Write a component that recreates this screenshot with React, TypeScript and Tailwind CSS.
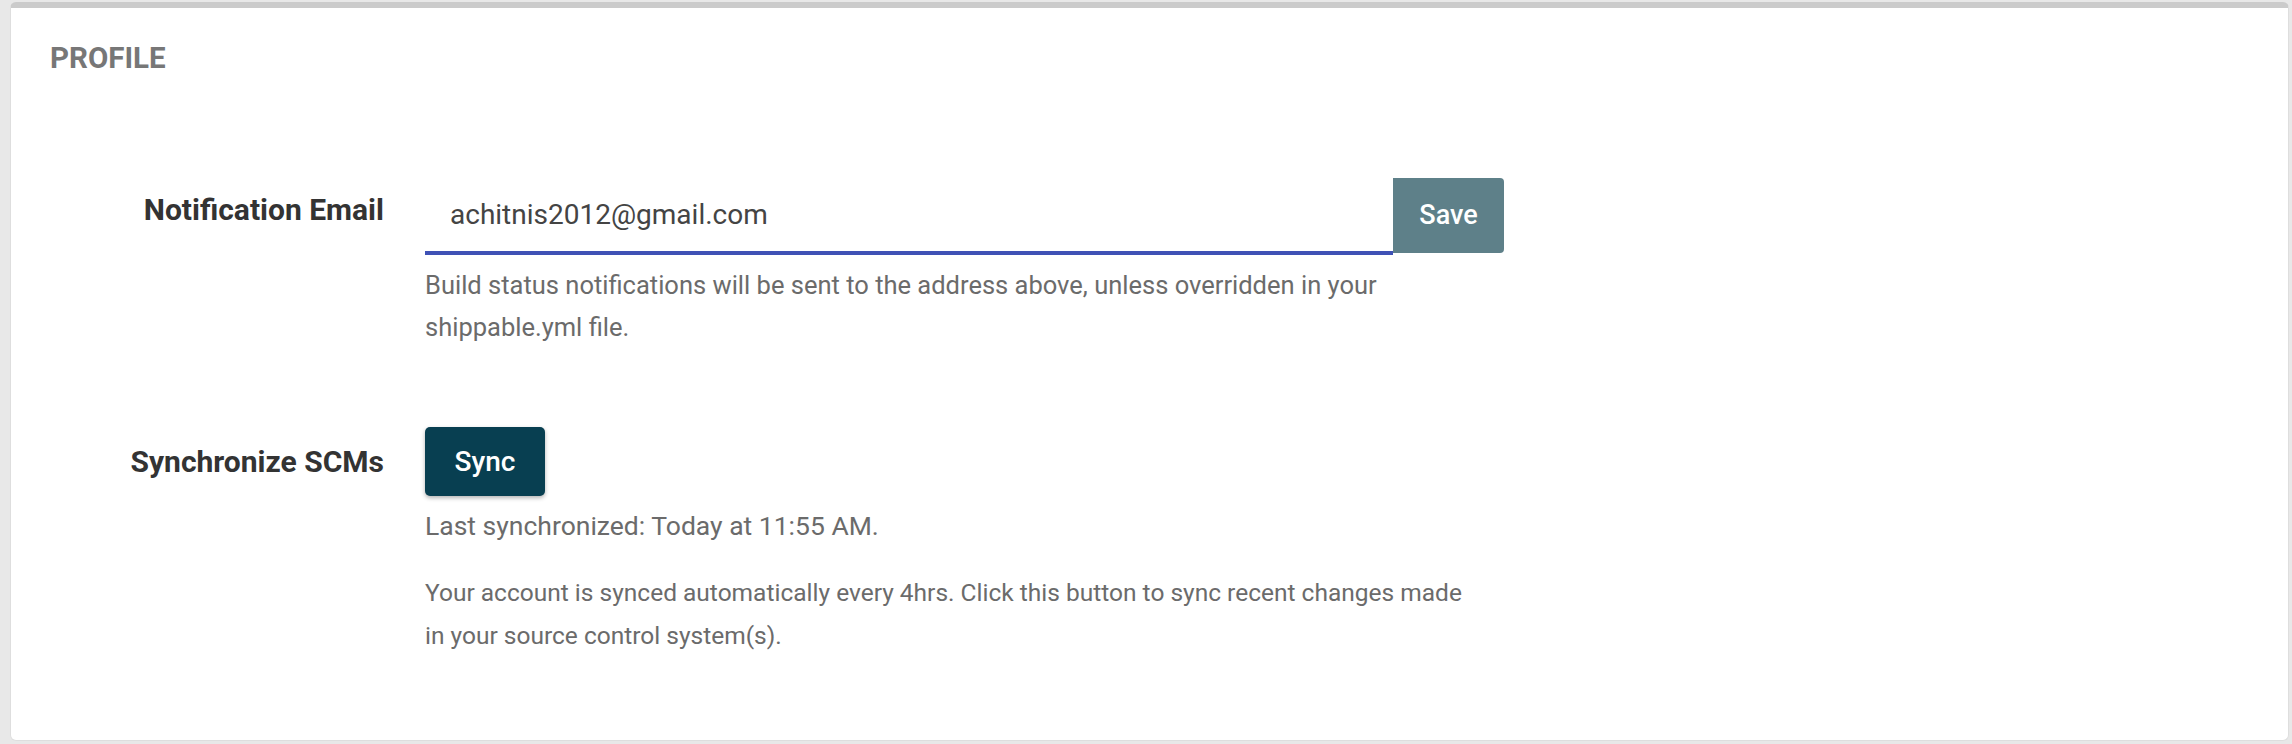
import React, { useState } from 'react';

export default function App() {
  const [email, setEmail] = useState('achitnis2012@gmail.com');

  return (
    <div
      className="h-[744px] bg-[#e8e8e8] pl-[10px] pt-[2px] pr-[3px] pb-[3px]"
      style={{ fontFamily: 'Roboto, "Noto Sans", sans-serif' }}
    >
      <div className="h-full rounded-[6px] border-t-[6px] border-x border-b border-[#cbcbcb] border-x-[#dedede] border-b-[#dedede] bg-white">
        <h2 className="pl-[39px] pt-[34px] text-[29.5px] leading-[32px] font-bold text-[#777777]">PROFILE</h2>

        <div className="mt-[104px] flex flex-col">
          {/* Notification email */}
          <div className="flex">
            <div className="w-[373px] shrink-0 pt-[12px] text-right text-[30px] leading-[40px] font-bold text-[#333333]">
              Notification Email
            </div>
            <div className="ml-[41px] w-[1079px]">
              <div className="flex items-end">
                <input
                  value={email}
                  onChange={(e) => setEmail(e.target.value)}
                  className="h-[77px] flex-1 border-b-[4px] border-[#3f51b5] pl-[25px] text-[28px] text-[#444444] outline-none"
                />
                <button className="mb-[2px] h-[75px] w-[111px] rounded-r-[4px] bg-[#5e8089] text-[27px] font-medium text-white">
                  Save
                </button>
              </div>
              <p className="mt-[9px] w-[1050px] text-[25.5px] leading-[42px] text-[#6b6b6b]">
                Build status notifications will be sent to the address above, unless overridden in your shippable.yml file.
              </p>
            </div>
          </div>

          {/* Synchronize SCMs */}
          <div className="mt-[79px] flex">
            <div className="w-[373px] shrink-0 pt-[15px] text-right text-[30px] leading-[40px] font-bold text-[#333333]">
              Synchronize SCMs
            </div>
            <div className="ml-[41px] w-[1079px]">
              <button className="h-[69px] w-[120px] rounded-[5px] bg-[#083f51] text-[28px] font-medium text-white shadow-[0_2px_4px_rgba(0,0,0,0.3)]">
                Sync
              </button>
              <p className="mt-[9px] text-[26.5px] leading-[42px] text-[#6b6b6b]">Last synchronized: Today at 11:55 AM.</p>
              <p className="mt-[24px] w-[1050px] text-[24.5px] leading-[43px] text-[#6b6b6b]">
                Your account is synced automatically every 4hrs. Click this button to sync recent changes made in your source control system(s).
              </p>
            </div>
          </div>
        </div>
      </div>
    </div>
  );
}
